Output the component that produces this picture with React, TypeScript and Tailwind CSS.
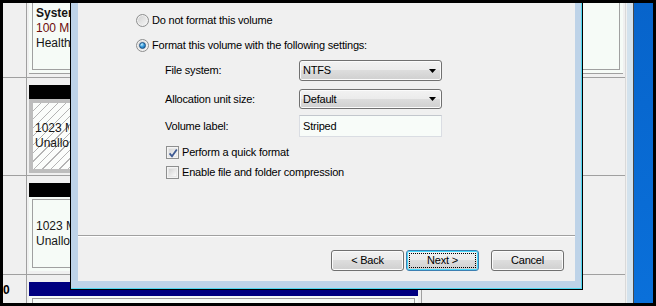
import clsx from "clsx";

function Radio({ checked }: { checked?: boolean }) {
  return (
    <span className="flex h-[13px] w-[13px] shrink-0 items-center justify-center rounded-full border border-[#8e8f8f] bg-[linear-gradient(135deg,#cfcfcf,#f8f8f8)] shadow-[inset_0_0_0_1px_#f2f2f2]">
      {checked && (
        <span className="h-[7px] w-[7px] rounded-full border border-[#174f85] bg-[radial-gradient(circle_at_35%_30%,#c8efff_0%,#3c9fdd_45%,#0d5598_100%)]" />
      )}
    </span>
  );
}

function Check({ checked }: { checked?: boolean }) {
  return (
    <span className="relative h-[13px] w-[13px] shrink-0 border border-[#8e8f8f] bg-[#f4f4f4] p-px">
      <span className="block h-full w-full border border-[#e8e8e8] bg-[linear-gradient(135deg,#d4d4d4,#fafafa)]" />
      {checked && (
        <svg className="absolute left-0 top-0" width="13" height="13" viewBox="0 0 13 13">
          <path d="M2.6 6.4 L5 9.3 L9.8 2.6" fill="none" stroke="#3e5a93" strokeWidth="1.8" />
        </svg>
      )}
    </span>
  );
}

const buttonFace =
  "bg-[linear-gradient(#f2f2f2_0%,#ebebeb_50%,#dddddd_50%,#cfcfcf_100%)]";

function Select({ value }: { value: string }) {
  return (
    <div
      className={clsx(
        "flex h-full w-[143px] items-center rounded-[3px] border border-[#707070] pl-[3px] pr-[5px] shadow-[inset_0_0_0_1px_#fbfbfb]",
        buttonFace
      )}
    >
      <span className="flex-1">{value}</span>
      <svg width="7" height="4" viewBox="0 0 7 4">
        <path d="M0 0 H7 L3.5 4 Z" fill="#000" />
      </svg>
    </div>
  );
}

function WinButton({ label, focused }: { label: string; focused?: boolean }) {
  return (
    <div
      className={clsx(
        "relative flex h-[21px] w-[73px] items-center justify-center rounded-[3px] border",
        buttonFace,
        focused
          ? "border-[#3c7fb1] shadow-[inset_0_0_0_1px_#48d8fb]"
          : "border-[#707070] shadow-[inset_0_0_0_1px_#fbfbfb]"
      )}
    >
      {focused && <div className="absolute inset-[2px] border border-dotted border-black" />}
      <span className="relative">{label}</span>
    </div>
  );
}

function Field({ label, children, h, mt }: { label: string; children: React.ReactNode; h: string; mt: string }) {
  return (
    <div className={clsx("flex items-center pl-[87px]", h, mt)}>
      <div className="w-[134px]">{label}</div>
      {children}
    </div>
  );
}

function LabelCol({ text }: { text?: string }) {
  return (
    <div className="w-[24px] shrink-0 border-r border-[#a0a0a0] pt-[8px] text-[12px] font-bold leading-[14px]">
      {text}
    </div>
  );
}

// text of a partition, clipped where the wizard window covers it
function CellText({ lines, first }: { lines: string[]; first?: "bold" }) {
  return (
    <div className="w-[34px] overflow-hidden whitespace-nowrap text-[12px] leading-[15px] text-[#151515]">
      {lines.map((l, i) => (
        <div key={l} className={clsx(i === 0 && first === "bold" && "font-bold", i === 1 && first === "bold" && "text-[#6e0b0b]")}>
          {l}
        </div>
      ))}
    </div>
  );
}

function PlainCell({ lines }: { lines: string[] }) {
  return (
    <div className="h-[74px] bg-[#f6fbf7] px-[3px] pb-[3px] pt-[2px]">
      <div className="flex h-full flex-col justify-center border border-[#a0a0a0] pl-[3px]">
        <CellText lines={lines} />
      </div>
    </div>
  );
}

function HatchedCell() {
  return (
    <div className="flex h-[74px] flex-col justify-center border-[4px] border-[#bdbdbd] bg-[repeating-linear-gradient(135deg,#fbfdfb_0px,#fbfdfb_5px,#b4b4b4_5px,#b4b4b4_6px)] pl-[2px]">
      <CellText lines={["1023 MB", "Unallocated"]} />
    </div>
  );
}

function DiskArea() {
  return (
    <div className="flex w-[622px] shrink-0 flex-col">
      {/* top disk, partition runs past the dialog */}
      <div className="flex h-[75px] border-b border-[#a0a0a0]">
        <LabelCol />
        <div className="ml-[2px] mr-[2px] h-[71px] flex-1 border-b border-[#a0a0a0] bg-[#f6fbf7] px-[3px] pb-[3px]">
          <div className="h-full border-x border-b border-[#a0a0a0] pl-[3px] pt-[3px]">
            <CellText first="bold" lines={["System Reserved", "100 MB NTFS", "Healthy"]} />
          </div>
        </div>
      </div>

      <div className="flex h-[98px] border-b border-[#a0a0a0]">
        <LabelCol />
        <div className="ml-[2px] flex w-[389px] flex-col pt-[7px]">
          <div className="h-[14px] bg-black" />
          <HatchedCell />
        </div>
        <div className="ml-[3px] w-px bg-[#a0a0a0]" />
      </div>

      <div className="flex h-[99px] border-b border-[#a0a0a0]">
        <LabelCol />
        <div className="ml-[2px] flex w-[389px] flex-col pt-[7px]">
          <div className="h-[14px] bg-black" />
          <PlainCell lines={["1023 MB", "Unallocated"]} />
        </div>
        <div className="ml-[3px] w-px bg-[#a0a0a0]" />
      </div>

      <div className="flex flex-1">
        <LabelCol text="0" />
        <div className="ml-[2px] flex w-[389px] flex-col pt-[7px]">
          <div className="h-[14px] shrink-0 bg-[#000080]" />
          <div className="flex-1 bg-[#f6fbf7] px-[3px] pt-[2px]">
            <div className="h-full border-x border-t border-[#a0a0a0]" />
          </div>
        </div>
        <div className="ml-[3px] w-px bg-[#a0a0a0]" />
      </div>
    </div>
  );
}

function Dialog() {
  return (
    <div className="absolute left-[67px] top-[-10px] h-[297px] w-[513px] border border-black">
      <div className="h-full w-full border-b border-r border-[#4fd8f0] bg-[#bed3e8] pb-[7px] pl-[7px] pr-[6px]">
        <div className="flex h-full flex-col bg-[#f0f0f0] text-[11px] tracking-[-0.2px] text-black">
          <div className="mt-[16px] flex h-[20px] items-center gap-[3px] pl-[58px]">
            <Radio />
            <span>Do not format this volume</span>
          </div>
          <div className="mt-[5px] flex h-[20px] items-center gap-[3px] pl-[58px]">
            <Radio checked />
            <span>Format this volume with the following settings:</span>
          </div>

          <Field label="File system:" h="h-[21px]" mt="mt-[5px]">
            <Select value="NTFS" />
          </Field>
          <Field label="Allocation unit size:" h="h-[20px]" mt="mt-[8px]">
            <Select value="Default" />
          </Field>
          <Field label="Volume label:" h="h-[22px]" mt="mt-[6px]">
            <div className="flex h-full w-[143px] items-center border border-[#dadde3] border-t-[#c3c7cd] bg-[#f8fcf9] pl-[3px]">
              Striped
            </div>
          </Field>

          <div className="mt-[9px] flex h-[13px] items-center gap-[3px] pl-[88px]">
            <Check checked />
            <span>Perform a quick format</span>
          </div>
          <div className="mt-[7px] flex h-[13px] items-center gap-[3px] pl-[88px]">
            <Check />
            <span>Enable file and folder compression</span>
          </div>

          <div className="mt-[56px] h-px bg-[#a0a0a0]" />
          <div className="h-px bg-white" />

          <div className="mt-[13px] flex justify-end pr-[11px]">
            <WinButton label="< Back" />
            <div className="ml-[2px]">
              <WinButton label="Next >" focused />
            </div>
            <div className="ml-[12px]">
              <WinButton label="Cancel" />
            </div>
          </div>
        </div>
      </div>
    </div>
  );
}

export default function App() {
  return (
    <div className="h-[306px] w-[656px] bg-black p-[3px] font-['Liberation_Sans',Arial,sans-serif]">
      <div className="relative flex h-full w-full overflow-hidden bg-[#f0f0f0]">
        <DiskArea />
        <div className="w-px bg-[#d9d9d9]" />
        <div className="w-px bg-[#f0f0f0]" />
        <div className="w-[6px] bg-[#d3e2ed]" />
        <div className="w-px bg-[#4a4a4a]" />
        <div className="flex-1 bg-[linear-gradient(#0764cb,#0a70da)]" />
        <Dialog />
      </div>
    </div>
  );
}
